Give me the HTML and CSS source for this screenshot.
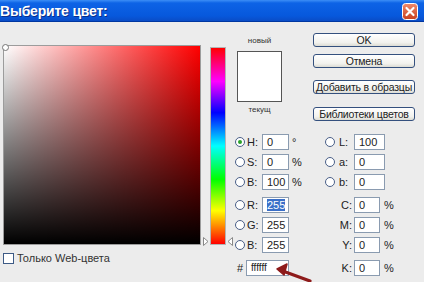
FILE: index.html
```html
<!DOCTYPE html>
<html lang="ru">

<head>
  <meta charset="UTF-8">
  <meta name="viewport" content="width=device-width, initial-scale=1.0">
  <title>Выберите цвет</title>
  <link rel="stylesheet" href="styles.css">
</head>

<body>
  <div class="window">
    <div class="titlebar">
      <span class="title">Выберите цвет:</span>
      <span class="close">
        <svg width="16" height="17" viewBox="0 0 16 17">
          <defs>
            <linearGradient id="cg" x1="0" y1="0" x2="0" y2="1">
              <stop offset="0" stop-color="#f08a6c" />
              <stop offset="1" stop-color="#c8401f" />
            </linearGradient>
          </defs>
          <rect x="0.5" y="0.5" width="15" height="16" rx="3" fill="url(#cg)" stroke="#fff" />
          <path d="M4.5 5 L11.5 12 M11.5 5 L4.5 12" stroke="#fff" stroke-width="2.2" stroke-linecap="round" />
        </svg>
      </span>
    </div>

    <div class="main">
      <div class="picker">
        <div class="field"><span class="marker"></span></div>
        <div class="webonly"><span class="check"></span>Только Web-цвета</div>
      </div>

      <div class="hue">
        <svg class="tri tri-left" width="6" height="9" viewBox="0 0 6 9"><path d="M0.5 0.5 L5 4.5 L0.5 8.5 Z" fill="#fff" stroke="#888" /></svg>
        <svg class="tri tri-right" width="6" height="9" viewBox="0 0 6 9"><path d="M5.5 0.5 L1 4.5 L5.5 8.5 Z" fill="#fff" stroke="#888" /></svg>
      </div>

      <div class="side">
        <div class="top">
          <div class="preview">
            <div class="cap">новый</div>
            <div class="swatch"></div>
            <div class="cap cap-low">текущ</div>
          </div>
          <div class="buttons">
            <div class="btn">OK</div>
            <div class="btn btn-cancel">Отмена</div>
            <div class="btn btn-add">Добавить в образцы</div>
            <div class="btn btn-lib">Библиотеки цветов</div>
          </div>
        </div>

        <div class="values">
          <div class="group group-left">
            <div class="row"><span class="radio on"></span><span class="lbl">H:</span><span class="inp">0</span><span class="unit">°</span></div>
            <div class="row"><span class="radio"></span><span class="lbl">S:</span><span class="inp">0</span><span class="unit">%</span></div>
            <div class="row"><span class="radio"></span><span class="lbl">B:</span><span class="inp">100</span><span class="unit">%</span></div>
            <div class="row gap"><span class="radio"></span><span class="lbl">R:</span><span class="inp"><span class="sel">255</span></span></div>
            <div class="row"><span class="radio"></span><span class="lbl">G:</span><span class="inp">255</span></div>
            <div class="row"><span class="radio"></span><span class="lbl">B:</span><span class="inp">255</span></div>
            <div class="row gap"><span class="hash">#</span><span class="inp inp-hex">ffffff</span></div>
          </div>

          <div class="group group-right">
            <div class="row"><span class="radio"></span><span class="lbl">L:</span><span class="inp inp-lab">100</span></div>
            <div class="row"><span class="radio"></span><span class="lbl">a:</span><span class="inp inp-lab">0</span></div>
            <div class="row"><span class="radio"></span><span class="lbl">b:</span><span class="inp inp-lab">0</span></div>
            <div class="row gap"><span class="lbl lbl-cmyk">C:</span><span class="inp inp-cmyk">0</span><span class="unit">%</span></div>
            <div class="row"><span class="lbl lbl-cmyk">M:</span><span class="inp inp-cmyk">0</span><span class="unit">%</span></div>
            <div class="row"><span class="lbl lbl-cmyk">Y:</span><span class="inp inp-cmyk">0</span><span class="unit">%</span></div>
            <div class="row gap"><span class="lbl lbl-cmyk">K:</span><span class="inp inp-cmyk">0</span><span class="unit">%</span></div>
          </div>
        </div>
      </div>
    </div>

    <!-- red pointer to the hex field -->
    <svg class="arrow" width="50" height="24" viewBox="0 0 50 24">
      <path d="M40 22 L10 11" stroke="#8e1b1b" stroke-width="3.2" stroke-linecap="round" />
      <path d="M7 10 L17 5 L14 16 Z" fill="#8e1b1b" stroke="#8e1b1b" stroke-width="1.5" stroke-linejoin="round" />
    </svg>
  </div>
</body>

</html>
```

FILE: styles.css
```css
body {
  margin: 0;
  background: #ececec;
  font-family: "Liberation Sans", Arial, sans-serif;
  font-size: 11px;
  color: #222;
}

.window {
  position: relative;
  width: 424px;
  height: 282px;
  overflow: hidden;
  background: #ececec;
}

/* XP style caption */
.titlebar {
  height: 21px;
  display: flex;
  align-items: center;
  justify-content: space-between;
  background: linear-gradient(#3c8ef6 0, #0d63e6 3px, #0758dc 16px, #0a4cc6 21px);
  border-bottom: 1px solid #0036a0;
}

.title {
  margin-left: 0;
  color: #fff;
  font-weight: bold;
  font-size: 14px;
  letter-spacing: -0.2px;
  text-shadow: 1px 1px 0 #0a2f8a;
}

.close {
  display: flex;
  margin-right: 6px;
  margin-top: 1px;
}

.main {
  display: flex;
  align-items: flex-start;
  padding-left: 3px;
}

.picker {
  margin-top: 23px;
}

.field {
  position: relative;
  width: 198px;
  height: 200px;
  box-sizing: border-box;
  border: 1px solid #9c9c9c;
  background:
    linear-gradient(to top, #000, rgba(0, 0, 0, 0)),
    linear-gradient(to right, #fff, #f00);
}

.marker {
  position: absolute;
  left: -2px;
  top: -2px;
  width: 5px;
  height: 5px;
  border: 1px solid #777;
  border-radius: 50%;
  background: #fff;
}

.webonly {
  display: flex;
  align-items: center;
  margin-top: 7px;
  color: #333;
}

.check {
  width: 9px;
  height: 9px;
  margin-right: 3px;
  border: 1px solid #3d5a85;
  background: #fff;
}

.hue {
  position: relative;
  margin-left: 9px;
  margin-top: 25px;
  width: 16px;
  height: 198px;
  box-sizing: border-box;
  border: 1px solid #b4b4b4;
  background: linear-gradient(#f00 0%, #f0f 17%, #00f 33%, #0ff 50%, #0f0 67%, #ff0 83%, #f00 100%);
}

.tri {
  position: absolute;
  bottom: -2px;
}

.tri-left {
  left: -8px;
}

.tri-right {
  right: -8px;
}

.side {
  margin-left: 7px;
  margin-top: 11px;
}

.top {
  display: flex;
  align-items: flex-start;
  height: 88px;
}

.preview {
  width: 53px;
  margin-top: 3px;
  display: flex;
  flex-direction: column;
  align-items: center;
}

.cap {
  font-size: 8px;
  line-height: 10px;
  color: #333;
}

.cap-low {
  margin-top: 3px;
}

.swatch {
  margin-top: 5px;
  width: 45px;
  height: 51px;
  box-sizing: border-box;
  border: 1px solid #555;
  background: #fff;
}

.buttons {
  margin-left: 27px;
  display: flex;
  flex-direction: column;
}

.btn {
  width: 102px;
  height: 14px;
  box-sizing: border-box;
  border: 1px solid #34507e;
  border-radius: 3px;
  background: linear-gradient(#ffffff, #f2f2ee 70%, #dcdcd4);
  text-align: center;
  white-space: nowrap;
  overflow: hidden;
  font-size: 10.5px;
  letter-spacing: -0.2px;
  line-height: 12px;
  color: #222;
}

.btn-cancel {
  margin-top: 7px;
}

.btn-add {
  margin-top: 12px;
}

.btn-lib {
  margin-top: 13px;
}

.values {
  display: flex;
  margin-top: 11px;
}

.group-left {
  width: 92px;
}

.row {
  display: flex;
  align-items: center;
  height: 20px;
}

.row.gap {
  margin-top: 3px;
}

.radio {
  width: 10px;
  height: 10px;
  box-sizing: border-box;
  border: 1px solid #4a5f88;
  border-radius: 50%;
  background: #fff;
  margin-left: 2px;
  display: flex;
  align-items: center;
  justify-content: center;
}

.radio.on::after {
  content: "";
  width: 4px;
  height: 4px;
  border-radius: 50%;
  background: #2aa22a;
}

.lbl {
  width: 15px;
  margin-left: 2px;
}

.inp {
  width: 27px;
  height: 16px;
  box-sizing: border-box;
  border: 1px solid #8a9bb0;
  background: #fff;
  padding-left: 4px;
  line-height: 14px;
  color: #222;
}

.sel {
  background: #3a6fc8;
  color: #fff;
}

.unit {
  margin-left: 3px;
}

.hash {
  width: 9px;
  margin-left: 4px;
}

.inp-hex {
  width: 43px;
  font-size: 10px;
}

.group-right .radio {
  margin-left: 0;
}

.group-right .lbl {
  margin-left: 4px;
}

.inp-lab {
  width: 31px;
}

.lbl-cmyk {
  width: 27px;
  margin-left: 0;
  text-align: right;
  padding-right: 2px;
}

.group-right .lbl-cmyk {
  margin-left: 0;
}

.inp-cmyk {
  width: 26px;
}

.group-right .unit {
  margin-left: 4px;
}

.arrow {
  position: absolute;
  left: 270px;
  top: 259px;
}
```
